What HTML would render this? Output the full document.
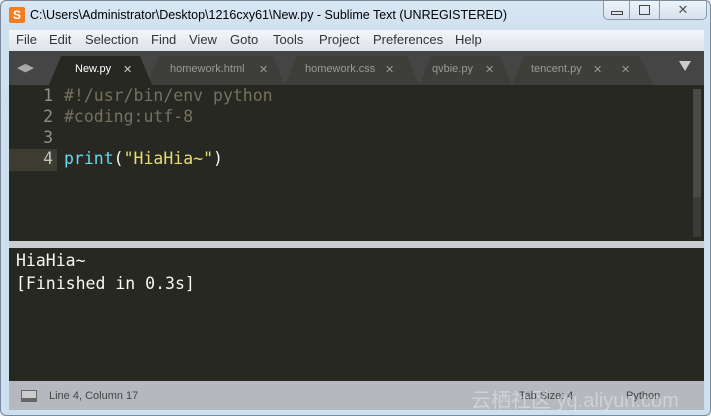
<!DOCTYPE html>
<html><head><style>
*{margin:0;padding:0;box-sizing:border-box}
body{width:711px;height:416px;overflow:hidden;background:#e8f1f8;font-family:"Liberation Sans",sans-serif;position:relative}
.win{position:absolute;left:0;top:0;width:711px;height:416px;background:linear-gradient(#d9e7f4,#cfe0ef 30px,#cde0ef);border:1px solid #7a8a9a;border-radius:6px}
.title{position:absolute;left:29px;top:7px;font-size:12.5px;color:#000}
.logo{position:absolute;left:8px;top:6px;width:16px;height:16px;background:#f47c22;border-radius:2px;color:#fff;font-size:12px;font-weight:bold;text-align:center;line-height:16px}
.btns{position:absolute;left:602px;top:0;width:104px;height:19px;border:1px solid #8a9aaa;border-top:none;border-radius:0 0 5px 5px;background:linear-gradient(#eef4fa,#d6e2ee)}
.btns div{position:absolute;top:0;height:18px;border-right:1px solid #8a9aaa}
.menu{position:absolute;left:8px;top:29px;width:695px;height:21px;background:linear-gradient(#f4f6f9,#dde2ea);font-size:13px;color:#333}
.menu span{position:absolute;top:2px}
.tabs{position:absolute;left:8px;top:50px;width:695px;height:34px;background:#454545}
.tab{position:absolute;top:5px;height:29px;font-size:11px;color:#999}
.ed{position:absolute;left:8px;top:84px;width:695px;height:156px;background:#272822;font-family:"DejaVu Sans Mono","Liberation Mono",monospace;font-size:16.5px}
.ln{position:absolute;left:0;width:44px;text-align:right;color:#8f908a}
.code{position:absolute;left:55px;color:#75715e}
.sep{position:absolute;left:8px;top:240px;width:695px;height:7px;background:#c9ccd0}
.out{position:absolute;left:8px;top:247px;width:695px;height:133px;background:#272822;color:#f8f8f2;font-family:"DejaVu Sans Mono","Liberation Mono",monospace;font-size:16.5px;padding:1px 0 0 7px;line-height:23px}
.status{position:absolute;left:8px;top:380px;width:695px;height:29px;background:#b5b9bf;font-size:11px;color:#444}
</style></head><body>
<div class="win">
<div class="logo">S</div>
<div class="title">C:\Users\Administrator\Desktop\1216cxy61\New.py - Sublime Text (UNREGISTERED)</div>
<div class="btns"><div style="left:0;width:26px"><span style="position:absolute;left:7px;top:10px;width:12px;height:4px;border:1px solid #444"></span></div><div style="left:26px;width:30px"><span style="position:absolute;left:9px;top:4px;width:11px;height:10px;border:1px solid #444"></span></div><div style="left:56px;width:46px;border:none;text-align:center;font-size:13px;color:#555;line-height:18px">✕</div></div>
<div class="menu"><span style="left:7px">File</span><span style="left:40px">Edit</span><span style="left:76px">Selection</span><span style="left:142px">Find</span><span style="left:180px">View</span><span style="left:221px">Goto</span><span style="left:264px">Tools</span><span style="left:310px">Project</span><span style="left:364px">Preferences</span><span style="left:446px">Help</span></div>
<div class="tabs">
<span style="position:absolute;left:8px;top:10px;color:#aaa;font-size:11px">◀▶</span>
<svg style="position:absolute;left:0;top:0" width="695" height="34">
<path d="M138 34 L150 5 L264 5 L276 34Z" fill="#3e3e3b"/>
<path d="M276 34 L288 5 L398 5 L410 34Z" fill="#3e3e3b"/>
<path d="M410 34 L422 5 L491 5 L503 34Z" fill="#3e3e3b"/>
<path d="M503 34 L515 5 L630 5 L645 34Z" fill="#3e3e3b"/>
<path d="M40 34 L52 5 L131 5 L143 34Z" fill="#272822"/>
<path d="M670 10 L682 10 L676 20Z" fill="#ccc"/>
</svg>
<span class="tab" style="left:66px;color:#fff;top:12px">New.py</span><span class="tab" style="left:114px;top:12px;color:#ccc">✕</span>
<span class="tab" style="left:161px;top:12px">homework.html</span><span class="tab" style="left:250px;top:12px">✕</span>
<span class="tab" style="left:296px;top:12px">homework.css</span><span class="tab" style="left:376px;top:12px">✕</span>
<span class="tab" style="left:423px;top:12px">qvbie.py</span><span class="tab" style="left:476px;top:12px">✕</span>
<span class="tab" style="left:522px;top:12px">tencent.py</span><span class="tab" style="left:584px;top:12px">✕</span><span class="tab" style="left:612px;top:12px">✕</span>
</div>
<div class="ed">
<div style="position:absolute;left:0;top:64px;width:48px;height:22px;background:#3e3d32"></div>
<div class="ln" style="top:1px">1</div><div class="ln" style="top:22px">2</div><div class="ln" style="top:43px">3</div><div class="ln" style="top:64px;color:#c2c2bf">4</div>
<div class="code" style="top:1px">#!/usr/bin/env python</div>
<div class="code" style="top:22px">#coding:utf-8</div>
<div class="code" style="top:64px;color:#f8f8f2"><span style="color:#66d9ef">print</span>(<span style="color:#e6db74">"HiaHia~"</span>)</div>
<div style="position:absolute;left:684px;top:4px;width:8px;height:148px;background:#3a3b36"></div>
<div style="position:absolute;left:684px;top:4px;width:8px;height:108px;background:#4a4b46"></div>
</div>
<div class="sep"></div>
<div class="out">HiaHia~<br>[Finished in 0.3s]</div>
<div class="status">
<div style="position:absolute;left:12px;top:9px;width:16px;height:12px;border:1px solid #666;border-bottom:4px solid #666;background:#ccc"></div>
<span style="position:absolute;left:40px;top:9px">Line 4, Column 17</span>
<span style="position:absolute;left:510px;top:9px">Tab Size: 4</span>
<span style="position:absolute;left:617px;top:9px">Python</span>
<span style="position:absolute;left:462px;top:3px;font-size:20px;color:rgba(255,255,255,0.35);font-family:'Liberation Sans','Noto Sans CJK SC',sans-serif">云栖社区 yq.aliyun.com</span>
</div>
</div>
</body></html>
